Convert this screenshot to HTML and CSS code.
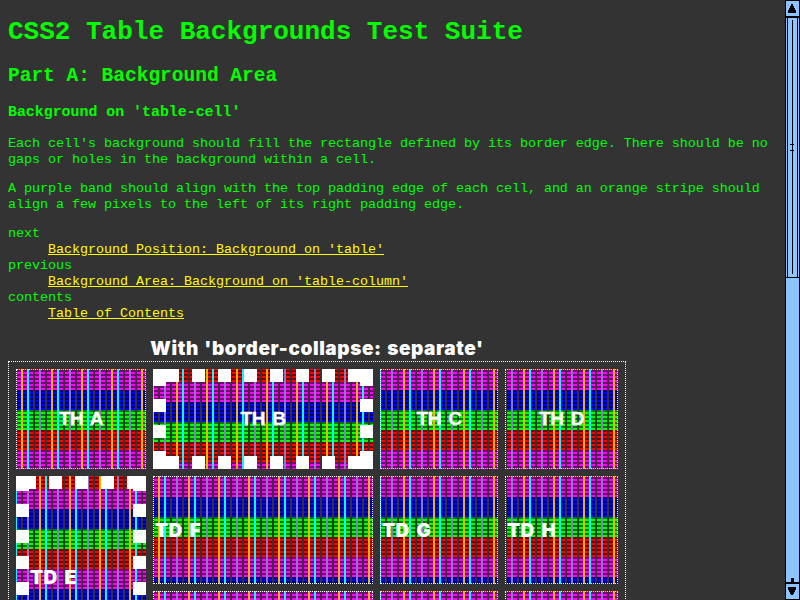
FILE: index.html
```html
<!DOCTYPE html>
<html lang="en">
<head>
<meta charset="utf-8">
<title>CSS2 Table Backgrounds Test Suite</title>
<link rel="stylesheet" href="styles.css">
</head>
<body>
<main class="page">
  <h1><span>CSS2 Table Backgrounds Test Suite</span></h1>
  <h2><span>Part A: Background Area</span></h2>
  <h3><span>Background on 'table-cell'</span></h3>
  <p>Each cell's background should fill the rectangle defined by its border edge. There should be no<br>gaps or holes in the background within a cell.</p>
  <p>A purple band should align with the top padding edge of each cell, and an orange stripe should<br>align a few pixels to the left of its right padding edge.</p>
  <dl>
    <dt>next</dt>
    <dd><a href="#">Background Position: Background on 'table'</a></dd>
    <dt>previous</dt>
    <dd><a href="#">Background Area: Background on 'table-column'</a></dd>
    <dt>contents</dt>
    <dd><a href="#">Table of Contents</a></dd>
  </dl>
  <div class="caption">With 'border-collapse: separate'</div>
  <div class="table">
    <div class="cell th"><span>TH A</span></div>
    <div class="cell th thick thick-b"><span>TH B</span></div>
    <div class="cell th"><span>TH C</span></div>
    <div class="cell th"><span>TH D</span></div>
    <div class="cell td thick thick-e"><span>TD E</span></div>
    <div class="cell td"><span>TD F</span></div>
    <div class="cell td"><span>TD G</span></div>
    <div class="cell td"><span>TD H</span></div>
    <div class="cell td"></div>
    <div class="cell td"></div>
    <div class="cell td"></div>
  </div>
</main>
<aside class="scrollbar">
  <svg width="15" height="600" viewBox="0 0 15 600" shape-rendering="crispEdges">
    <rect width="15" height="600" fill="#000"/>
    <path fill="#8cc4ff" d="M1 1h13v15H1zM1 18h13v564H1zM1 584h13v15H1z"/>
    <path fill="#000" d="M6 4h2v2h1v2h1v2h1v3H3v-3h1V8h1V6h1z"/>
    <path fill="#000" d="M2 18h1v260H2zM12 18h1v260h-1zM7 20h1v254H7zM1 277h13v1H1zM5 144h4v1H5zM5 150h4v1H5zM6 578h3v4H6z"/>
    <path fill="#000" d="M3 587h8v3h-1v2H9v2H8v1H6v-1H5v-2H4v-2H3z"/>
  </svg>
</aside>
</body>
</html>
```
FILE: styles.css
```css
html, body {
  margin: 0;
  height: 600px;
  overflow: hidden;
  background: #333;
}

body {
  display: flex;
  color: #0f0;
  font: 13.333px/16px "Liberation Mono", monospace;
}

.page {
  width: 777px;
  padding-top: 1px;
  padding-left: 8px;
  overflow: hidden;
  white-space: nowrap;
}

.scrollbar {
  width: 15px;
  height: 600px;
}

.scrollbar svg {
  display: block;
}

h1, h2, h3, p, dl, dd {
  margin: 0;
}

h1 {
  margin-top: 16px;
  font-size: 26px;
  line-height: 30px;
}

h2 {
  margin-top: 17px;
  font-size: 19.5px;
  line-height: 24px;
}

h3 {
  margin-top: 16px;
  font-size: 14.9px;
  line-height: 16px;
}

p {
  margin-top: 16px;
}

p + p {
  margin-top: 13px;
}

dl {
  margin-top: 13px;
}

dd {
  margin-left: 40px;
}

a {
  color: #ff0;
}

.caption {
  width: 618px;
  margin-top: 16px;
  height: 23px;
  text-align: center;
  color: #fff;
  font: 900 19px/22px Inter, sans-serif;
  letter-spacing: .6px;
  word-spacing: 1px;
}

.table {
  display: grid;
  box-sizing: border-box;
  width: 618px;
  padding: 7px;
  grid-template-columns: 130px 220px 118px 113px;
  grid-template-rows: 100px 108px 86px;
  gap: 7px;
  border: 1px dotted #fff;
}

.cell {
  --stripes: linear-gradient(90deg,
    transparent 0 2px, #0ff 2px 4px, transparent 4px 8px,
    #333 8px 10px, transparent 10px 14px,
    #8080c0 14px 16px, transparent 16px 20px,
    #333 20px 22px, transparent 22px 26px,
    #e6b800 26px 28px, transparent 28px) right top / 30px 80px;
  --bands: linear-gradient(#f0f 0 20px, #00f 20px 40px, #0f0 40px 60px, #f00 60px) right top / 30px 80px;
  --shade: linear-gradient(rgba(0, 0, 0, .5) 0 2px, transparent 2px) right top / 30px 4px;
  box-sizing: border-box;
  display: flex;
  align-items: center;
  border: 1px dotted #fff;
  background: var(--stripes), var(--shade), var(--bands);
  color: #fff;
}

.th {
  justify-content: center;
  font: bold 19px/22px "Liberation Sans", sans-serif;
  letter-spacing: -.3px;
  word-spacing: 2px;
  -webkit-text-stroke: .4px #fff;
}

.td {
  padding: 2px 1px 0;
  font: 900 19px/24px Inter, sans-serif;
  letter-spacing: .5px;
  word-spacing: 2.5px;
}

.thick {
  position: relative;
  border: 13px solid transparent;
}

/* Square 13px dashes around the thick cells; each side has its own phase. */
.thick::before {
  content: "";
  position: absolute;
  inset: -13px;
  --h: linear-gradient(90deg, #fff 13px, transparent 13px);
  --v: linear-gradient(#fff 13px, transparent 13px);
  --c: linear-gradient(#fff, #fff);
  background:
    var(--c) left top / 13px 13px no-repeat,
    var(--c) right top / 13px 13px no-repeat,
    var(--c) left bottom / 13px 13px no-repeat,
    var(--c) right bottom / 13px 13px no-repeat,
    var(--h) var(--hx) top / 26px 13px repeat-x,
    var(--h) var(--hx) bottom / 26px 13px repeat-x,
    var(--v) left var(--vy) / 13px 26px repeat-y,
    var(--v) right var(--vy) / 13px 26px repeat-y;
}

.thick-b {
  --hx: 13px;
  --vy: 4px;
}

.thick-e {
  --hx: 7px;
  --vy: 2px;
  grid-row: span 2;
  height: 201px;
}
```
